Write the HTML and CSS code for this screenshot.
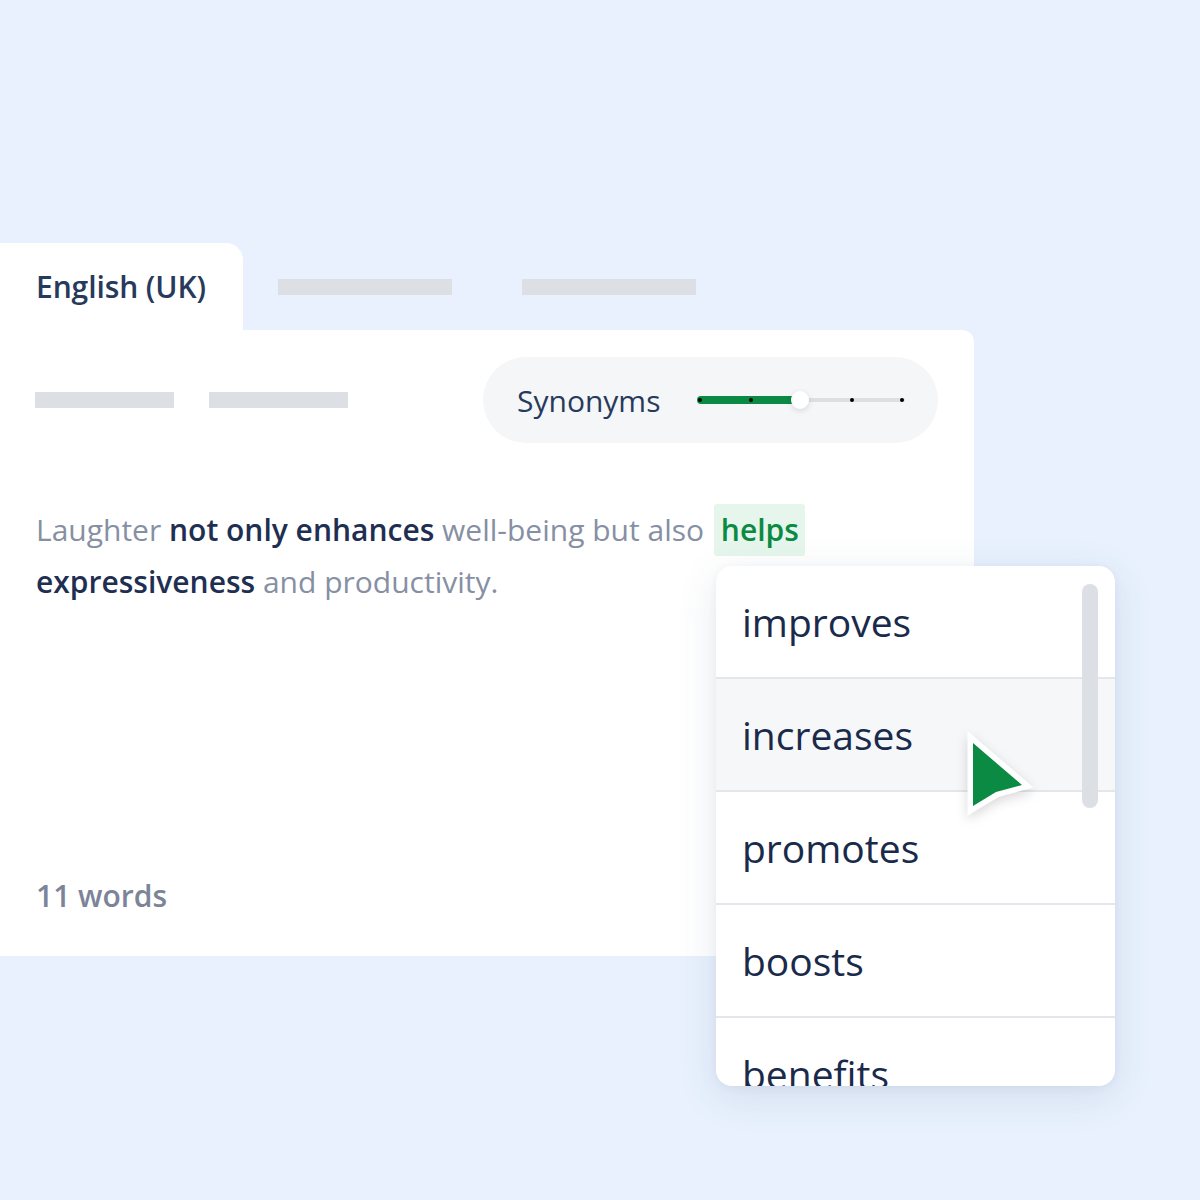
FILE: index.html
```html
<!DOCTYPE html>
<html lang="en">
<head>
<meta charset="utf-8">
<title>Synonyms</title>
<link rel="stylesheet" href="styles.css">
</head>
<body>
<div class="stage">
  <div class="tabs">
    <div class="tab tab-active">English (UK)</div>
    <div class="tab-placeholder"></div>
    <div class="tab-placeholder"></div>
  </div>
  <div class="card">
    <div class="toolbar">
      <div class="bars">
        <span class="bar"></span>
        <span class="bar"></span>
      </div>
      <div class="pill">
        <span class="pill-label">Synonyms</span>
        <div class="slider">
          <div class="track"></div>
          <div class="fill"></div>
          <span class="dot d1"></span>
          <span class="dot d2"></span>
          <span class="dot d3"></span>
          <span class="dot d4"></span>
          <span class="knob"></span>
        </div>
      </div>
    </div>
    <p class="text">Laughter <b>not only enhances</b> well-being but also <span class="hl">helps</span> <b>expressiveness</b> and productivity.</p>
    <div class="count">11 words</div>
  </div>

  <div class="dropdown">
    <div class="item">improves</div>
    <div class="item item-hover">increases</div>
    <div class="item">promotes</div>
    <div class="item">boosts</div>
    <div class="item">benefits</div>
    <span class="scrollbar"></span>
  </div>

  <svg class="cursor" width="100" height="120" viewBox="0 0 100 120">
    <polygon points="13,23 62,65 36,72 13,86" fill="#0b8a44" stroke="#ffffff" stroke-width="11" stroke-linejoin="miter" stroke-miterlimit="4" paint-order="stroke"/>
  </svg>
</div>
</body>
</html>
```

FILE: styles.css
```css
* { box-sizing: border-box; }

html, body {
  margin: 0;
  padding: 0;
}

body {
  background: #e8f1fd;
  font-family: "Open Sans", "Noto Sans", sans-serif;
}

.stage {
  position: relative;
  width: 1200px;
  height: 1200px;
  padding-top: 243px;
}

.tabs {
  display: flex;
  align-items: center;
  height: 87px;
}

.tab-active {
  width: 243px;
  height: 87px;
  background: #ffffff;
  border-top-right-radius: 17px;
  padding-left: 36px;
  display: flex;
  align-items: center;
  font-size: 30px;
  font-weight: 600;
  color: #283a5b;
  letter-spacing: -0.1px;
}

.tab-placeholder {
  width: 174px;
  height: 16px;
  background: #dcdfe4;
  margin-left: 35px;
}
.tab-placeholder + .tab-placeholder {
  margin-left: 70px;
}

.card {
  width: 974px;
  height: 626px;
  background: #ffffff;
  border-top-right-radius: 12px;
  padding: 27px 36px 34px 35px;
  display: flex;
  flex-direction: column;
}

.toolbar {
  display: flex;
  align-items: center;
  justify-content: space-between;
  height: 86px;
}

.bars {
  display: flex;
  gap: 35px;
}
.bar {
  display: block;
  width: 139px;
  height: 16px;
  background: #dcdfe4;
}

.pill {
  width: 455px;
  height: 86px;
  border-radius: 43px;
  background: #f4f6f8;
  display: flex;
  align-items: center;
  padding-left: 34px;
}
.pill-label {
  font-size: 30px;
  font-weight: 500;
  color: #283a5b;
  width: 180px;
  flex: none;
}

.slider {
  position: relative;
  width: 208px;
  height: 20px;
  flex: none;
}
.track {
  position: absolute;
  left: 2px;
  right: 0;
  top: 8px;
  height: 4px;
  border-radius: 2px;
  background: #dedfe1;
}
.fill {
  position: absolute;
  left: 0;
  width: 104px;
  top: 6px;
  height: 8px;
  border-radius: 4px;
  background: #0b8a44;
}
.dot {
  position: absolute;
  top: 8px;
  width: 4px;
  height: 4px;
  border-radius: 50%;
  background: #000;
}
.d1 { left: 1px; }
.d2 { left: 52px; }
.d3 { left: 153px; }
.d4 { left: 203px; }
.knob {
  position: absolute;
  left: 94px;
  top: 1px;
  width: 18px;
  height: 18px;
  border-radius: 50%;
  background: #ffffff;
  box-shadow: 0 2px 6px rgba(0, 0, 0, 0.12);
}

.text {
  margin: 61px 0 0 1px;
  font-size: 30px;
  line-height: 52px;
  color: #868fa3;
  font-weight: 400;
  width: 800px;
}
.text b {
  font-weight: 600;
  color: #1f2f52;
}
.hl {
  display: inline-block;
  background: #e6f6ec;
  color: #0b8a44;
  font-weight: 600;
  padding: 0 6px 0 7px;
  margin-left: 2px;
  border-radius: 3px;
  line-height: 52px;
}

.count {
  margin-top: auto;
  margin-left: 1px;
  font-size: 30px;
  line-height: 52px;
  font-weight: 600;
  color: #7b8498;
}

.dropdown {
  position: absolute;
  left: 716px;
  top: 566px;
  width: 399px;
  height: 520px;
  background: #ffffff;
  border-radius: 16px;
  overflow: hidden;
  box-shadow: 0 10px 40px rgba(60, 80, 120, 0.12), 0 2px 8px rgba(60, 80, 120, 0.06);
}
.item {
  height: 113px;
  padding-left: 26px;
  display: flex;
  align-items: center;
  font-size: 39px;
  color: #1a2a4b;
  border-bottom: 2px solid #e3e6ea;
}
.item-hover {
  background: #f5f7f9;
}
.scrollbar {
  position: absolute;
  left: 366px;
  top: 18px;
  width: 16px;
  height: 224px;
  border-radius: 8px;
  background: #dcdfe3;
}

.cursor {
  position: absolute;
  left: 960px;
  top: 720px;
  filter: drop-shadow(0 4px 6px rgba(0, 0, 0, 0.15));
}
```
